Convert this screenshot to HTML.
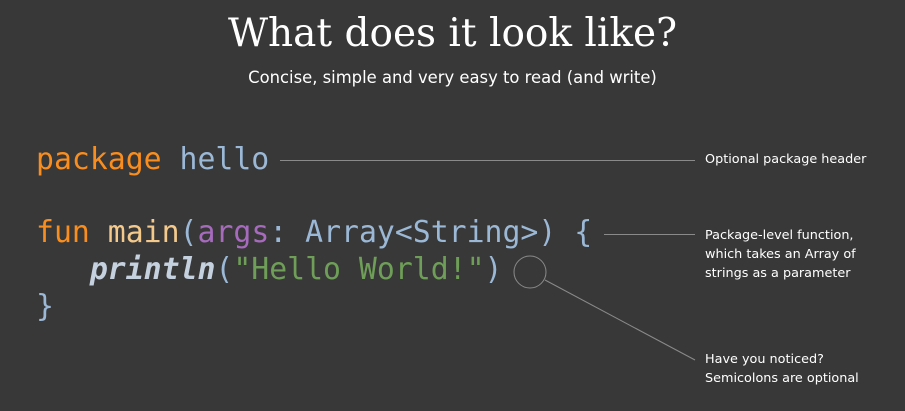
<!DOCTYPE html>
<html><head><style>
body{margin:0;width:905px;height:411px;background:#383838;overflow:hidden;position:relative;font-family:"DejaVu Sans","Liberation Sans",sans-serif;color:#fff}
.t{position:absolute;left:0;width:905px;text-align:center}
.code{position:absolute;left:36px;font-family:"DejaVu Sans Mono","Liberation Mono",monospace;font-size:29.8px;white-space:pre;line-height:37px}
.o{color:#f98d1e}.y{color:#f3c98c}.b{color:#9bb8d6}.p{color:#a66bbd}.g{color:#6e9e57}.w{color:#c6d1e0;font-style:italic;font-weight:bold}
.n{position:absolute;left:705px;font-size:12.8px;line-height:19px;color:#fff}
</style></head><body>
<div class="t" style="top:11px;font-family:'DejaVu Serif','Liberation Serif',serif;font-size:39px">What does it look like?</div>
<div class="t" style="top:68px;font-size:16.4px">Concise, simple and very easy to read (and write)</div>
<div class="code" style="top:141px"><span class="o">package</span> <span class="b">hello</span></div>
<div class="code" style="top:214px"><span class="o">fun</span> <span class="y">main</span><span class="b">(</span><span class="p">args</span><span class="b">: Array&lt;String&gt;) {</span>
   <span class="w">println</span><span class="b">(</span><span class="g">"Hello World!"</span><span class="b">)</span>
<span class="b">}</span></div>
<svg style="position:absolute;left:0;top:0" width="905" height="411">
<g stroke="#8a8a8a" stroke-width="1" fill="none">
<line x1="280" y1="160.5" x2="695" y2="160.5"/>
<line x1="604" y1="234.5" x2="695" y2="234.5"/>
<circle cx="530" cy="272" r="16"/>
<line x1="545" y1="280" x2="695" y2="360"/>
</g></svg>
<div class="n" style="top:150px">Optional package header</div>
<div class="n" style="top:226px">Package-level function,<br>which takes an Array of<br>strings as a parameter</div>
<div class="n" style="top:350px">Have you noticed?<br>Semicolons are optional</div>
</body></html>
